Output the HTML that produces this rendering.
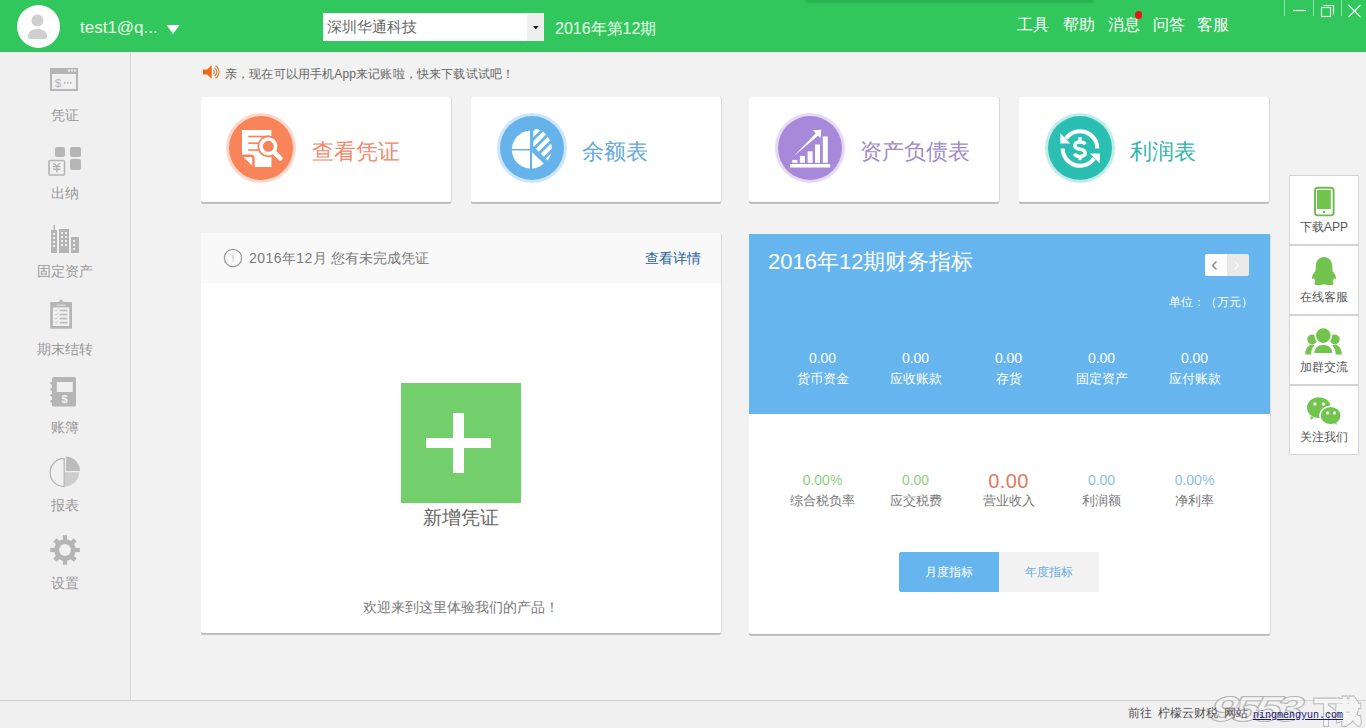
<!DOCTYPE html>
<html><head><meta charset="utf-8">
<style>
*{margin:0;padding:0;box-sizing:border-box}
html,body{width:1366px;height:728px;overflow:hidden;background:#f2f2f2;font-family:"Liberation Sans",sans-serif;position:relative}
.a{position:absolute}
.t{position:absolute;white-space:nowrap;line-height:1}
#hdr{left:0;top:0;width:1366px;height:52px;background:#32c75d}
#side{left:0;top:53px;width:130px;height:647px;background:#f0f0f0}
#sline{left:130px;top:53px;width:1px;height:647px;background:#d4d4d4;box-shadow:1px 0 0 #f7f7f7,2px 0 0 #f5f5f5}
#foot{left:0;top:700px;width:1366px;height:28px;background:#f0f0f0;border-top:1px solid #d0d0d0}
.nav{width:130px;left:0;text-align:center;font-size:14px;color:#999}
.card{position:absolute;background:#fff;border-radius:2px;box-shadow:1px 0 0 #d8d8d8,0 1px 0 #bcbcbc,0 2px 0.6px #c2c2c2}
.circ{position:absolute;width:70px;height:70px;border-radius:50%}
.ctext{font-size:22px}
.rb{position:absolute;left:1289px;width:70px;height:70px;background:#fff;border:1px solid #d4d4d4}
.rb .t{left:0;width:68px;top:45px;font-size:12px;color:#555;text-align:center}
.val{font-size:14px;text-align:center;width:93px}
.lab{font-size:13px;text-align:center;width:93px}
</style></head><body>
<!-- header -->
<div id="hdr" class="a"></div>
<div class="a" style="left:0;top:51px;width:1366px;height:1px;background:#37bb63"></div>
<div class="a" style="left:0;top:52px;width:1366px;height:1px;background:#e4f9e6"></div>
<div class="a" style="left:806px;top:0;width:288px;height:6px;background:linear-gradient(rgba(24,150,60,.85) 0,rgba(30,160,66,.55) 25%,rgba(40,180,80,.2) 60%,rgba(51,198,92,0) 100%);filter:blur(0.8px)"></div>
<div class="a" style="left:17px;top:5px;width:43px;height:43px;border-radius:50%;background:#fff"></div>
<svg class="a" style="left:17px;top:5px" width="43" height="43" viewBox="0 0 43 43">
<circle cx="20.5" cy="15.5" r="6" fill="#cfcfcf"/>
<path d="M11 32 Q11 24 20.5 24 Q30 24 30 32 Q30 34 28 34 L13 34 Q11 34 11 32Z" fill="#cfcfcf"/>
</svg>
<div class="t" style="left:80px;top:19px;font-size:17px;color:#e8ffe8">test1@q...</div>
<svg class="a" style="left:166px;top:25px" width="14" height="10"><path d="M0.5 0 L13.5 0 L7 9Z" fill="#fff"/></svg>
<div class="a" style="left:323px;top:13px;width:221px;height:28px;background:#fff"></div>
<div class="a" style="left:527px;top:13px;width:17px;height:28px;background:#efefef"></div>
<svg class="a" style="left:532.5px;top:25.8px" width="6" height="4"><path d="M0 0 L5.6 0 L2.8 3.2Z" fill="#111"/></svg>
<div class="t" style="left:327px;top:19px;font-size:15px;color:#666">深圳华通科技</div>
<div class="t" style="left:555px;top:20.5px;font-size:16px;color:#eaffea">2016年第12期</div>
<div class="t" style="left:1017px;top:17px;font-size:16px;color:#fff">工具</div>
<div class="t" style="left:1063px;top:17px;font-size:16px;color:#fff">帮助</div>
<div class="t" style="left:1108px;top:17px;font-size:16px;color:#fff">消息</div>
<div class="t" style="left:1153px;top:17px;font-size:16px;color:#fff">问答</div>
<div class="t" style="left:1197px;top:17px;font-size:16px;color:#fff">客服</div>
<div class="a" style="left:1134.5px;top:11px;width:7.5px;height:7.5px;border-radius:50%;background:#e8161a"></div>
<div class="a" style="left:1284px;top:0;width:1px;height:16px;background:rgba(255,255,255,.45)"></div>
<div class="a" style="left:1313px;top:0;width:1px;height:16px;background:rgba(255,255,255,.45)"></div>
<div class="a" style="left:1341px;top:0;width:1px;height:16px;background:rgba(255,255,255,.45)"></div>
<svg class="a" style="left:1285px;top:0" width="81" height="20">
<path d="M8 10.5 H21" stroke="#e6ffe6" stroke-width="1.2"/>
<rect x="36.5" y="7.5" width="9" height="9" fill="none" stroke="#e6ffe6" stroke-width="1.2"/>
<path d="M38.5 5.5 H48.5 V14.5" fill="none" stroke="#e6ffe6" stroke-width="1.2"/>
<path d="M63.5 5 L75.5 17 M75.5 5 L63.5 17" stroke="#e6ffe6" stroke-width="1.3"/>
</svg>
<!-- sidebar -->
<div id="side" class="a"></div>
<div id="sline" class="a"></div>
<svg class="a" style="left:0;top:52px" width="130" height="560" viewBox="0 52 130 560">
<g fill="#b5b5b5">
<!-- voucher window -->
<rect x="50" y="68" width="28" height="23" fill="#b5b5b5"/>
<rect x="52" y="74" width="24" height="15" fill="#f0f0f0"/>
<rect x="68" y="69.5" width="2" height="2" fill="#f0f0f0"/><rect x="71" y="69.5" width="2" height="2" fill="#f0f0f0"/><rect x="74" y="69.5" width="2" height="2" fill="#f0f0f0"/>
<text x="55" y="87" font-size="11" font-family="Liberation Sans" fill="#b5b5b5">$</text>
<rect x="64" y="82" width="1.6" height="1.6"/><rect x="67" y="82" width="1.6" height="1.6"/><rect x="70" y="82" width="1.6" height="1.6"/>
<!-- cashier -->
<rect x="55" y="147" width="10" height="10" rx="2"/>
<rect x="70" y="147" width="11" height="10" rx="2"/>
<rect x="70" y="159" width="11" height="11" rx="2"/>
<rect x="49" y="160.5" width="15.5" height="14.5" rx="1" fill="none" stroke="#b5b5b5" stroke-width="1.6"/>
<path d="M53.5 163.2 L56.8 166.2 M60 163.2 L56.8 166.2 M53 166.6 H60.5 M53 169.3 H60.5 M56.8 166.2 V172.5" stroke="#b5b5b5" stroke-width="1.4" fill="none"/>
<!-- fixed assets -->
<rect x="53.5" y="225" width="1.5" height="6"/>
<rect x="51" y="230" width="6" height="23"/>
<rect x="59" y="229" width="10" height="24"/>
<rect x="71" y="237" width="8" height="16"/>
<g fill="#f0f0f0">
<rect x="53" y="233" width="2" height="2"/><rect x="53" y="237" width="2" height="2"/><rect x="53" y="241" width="2" height="2"/><rect x="53" y="245" width="2" height="2"/>
<rect x="61" y="232" width="2" height="2"/><rect x="65" y="232" width="2" height="2"/><rect x="61" y="236" width="2" height="2"/><rect x="65" y="236" width="2" height="2"/><rect x="61" y="240" width="2" height="2"/><rect x="65" y="240" width="2" height="2"/><rect x="61" y="244" width="2" height="2"/><rect x="65" y="244" width="2" height="2"/>
<rect x="73" y="240" width="2" height="2"/><rect x="73" y="244" width="2" height="2"/><rect x="73" y="248" width="2" height="2"/>
</g>
<!-- clipboard -->
<rect x="50.2" y="302" width="21.8" height="26.7" rx="0.8"/>
<rect x="52.9" y="307.4" width="16.4" height="18.6" fill="#f0f0f0"/>
<path d="M56.8 304.6 L59 301.5 L61 299 L63 301.5 L65.2 304.6Z"/>
<path d="M56.5 305.2 H65.5" stroke="#e4e4e4" stroke-width="1"/>
<g fill="#bdbdbd"><rect x="59.7" y="309.6" width="7.6" height="1.7"/><rect x="59.7" y="313.7" width="7.6" height="1.7"/><rect x="59.7" y="317.7" width="7.6" height="1.7"/><rect x="59.7" y="321.8" width="7.6" height="1.7"/></g>
<g fill="none" stroke="#c8c8c8" stroke-width="0.9"><path d="M55 310 L56 311.2 L58 308.8"/><path d="M55 314 L56 315.2 L58 312.8"/><path d="M55 318 L56 319.2 L58 316.8"/><path d="M55 322 L56 323.2 L58 320.8"/></g>
<!-- book -->
<rect x="52" y="377" width="24" height="29.6" rx="1.5"/>
<rect x="56.8" y="382" width="15.9" height="10" fill="#f0f0f0"/>
<circle cx="51.6" cy="383.3" r="1.4"/><circle cx="51.6" cy="389.3" r="1.4"/><circle cx="51.6" cy="395.3" r="1.4"/><circle cx="51.6" cy="401.3" r="1.4"/>
<text x="61.6" y="403.3" font-size="11" font-weight="bold" font-family="Liberation Sans" fill="#f0f0f0">$</text>
<!-- pie -->
<path d="M64.2 458.3 A14.1 14.1 0 0 0 64.2 486.5 Z" fill="none" stroke="#b5b5b5" stroke-width="1.3"/>
<path d="M66 456.5 A14.5 14.5 0 0 1 80 471 H66Z" fill="#bcbcbc"/>
<path d="M65 472.3 H79.2 A14.2 14.2 0 0 1 65 486.5Z" fill="#cdcdcd"/>
<!-- gear -->
<g transform="translate(65 550)">
<circle r="10.8"/>
<rect x="-2.1" y="-14.8" width="4.2" height="29.6"/><rect x="-14.8" y="-2.1" width="29.6" height="4.2"/>
<rect x="-2.3" y="-14.3" width="4.6" height="28.6" transform="rotate(45)"/><rect x="-14.3" y="-2.3" width="28.6" height="4.6" transform="rotate(45)"/>
<circle r="5.9" fill="#f0f0f0"/>
</g>
</g>
</svg>
<div class="t nav" style="top:108px">凭证</div>
<div class="t nav" style="top:186px">出纳</div>
<div class="t nav" style="top:264px">固定资产</div>
<div class="t nav" style="top:342px">期末结转</div>
<div class="t nav" style="top:420px">账簿</div>
<div class="t nav" style="top:498px">报表</div>
<div class="t nav" style="top:576px">设置</div>
<!-- notice -->
<svg class="a" style="left:202px;top:65px" width="18" height="14" viewBox="0 0 18 14">
<path d="M1 4.4 H5 L9.7 0.3 V13.6 L5 9.5 H1Z" fill="#f06a10"/>
<g fill="none" stroke="#d9772f" stroke-width="1.05">
<path d="M11.34 4.93 A2.7 2.7 0 0 1 11.34 9.07"/><path d="M12.47 2.90 A5.0 5.0 0 0 1 12.47 11.10"/><path d="M13.52 0.72 A7.4 7.4 0 0 1 13.52 13.28"/>
</g>
</svg>
<div class="t" style="left:225px;top:67.5px;font-size:12px;color:#666;letter-spacing:0.15px">亲，现在可以用手机App来记账啦，快来下载试试吧！</div>
<!-- cards -->
<div class="card" style="left:201px;top:97px;width:250px;height:105px"></div>
<div class="card" style="left:471px;top:97px;width:250px;height:105px"></div>
<div class="card" style="left:749px;top:97px;width:250px;height:105px"></div>
<div class="card" style="left:1019px;top:97px;width:250px;height:105px"></div>
<div class="circ" style="left:226px;top:113px;background:#fcd9cb"></div>
<div class="circ" style="left:229px;top:116px;width:64px;height:64px;background:#f9845a"></div>
<div class="circ" style="left:497px;top:113px;background:#cbe6fa"></div>
<div class="circ" style="left:500px;top:116px;width:64px;height:64px;background:#66b3ec"></div>
<div class="circ" style="left:775px;top:113px;background:#e4daf6"></div>
<div class="circ" style="left:778px;top:116px;width:64px;height:64px;background:#a68ad9"></div>
<div class="circ" style="left:1045px;top:113px;background:#c2ece8"></div>
<div class="circ" style="left:1048px;top:116px;width:64px;height:64px;background:#2bbfb3"></div>
<!-- icon: voucher search -->
<svg class="a" style="left:226px;top:113px" width="70" height="70" viewBox="0 0 70 70">
<path d="M16 17 H45.4 V54 H28.7 V45 Q28.7 41.5 25 41.5 H16Z" fill="#fff"/>
<path d="M17.5 44 H24.5 Q26.2 44 26.2 45.7 V52.8Z" fill="#fff"/>
<g fill="#f9845a"><rect x="22.2" y="22.7" width="22" height="1.6"/><rect x="22.2" y="29.4" width="11.5" height="1.6"/><rect x="22.2" y="36.2" width="11.5" height="1.6"/></g>
<circle cx="42.3" cy="33.3" r="10.8" fill="#f9845a"/>
<path d="M48.5 39.5 L54.6 45.6" stroke="#f9845a" stroke-width="8" stroke-linecap="round"/>
<circle cx="42.3" cy="33.3" r="7.3" fill="none" stroke="#fff" stroke-width="3.6"/>
<path d="M48 39 L54.3 45.3" stroke="#fff" stroke-width="4.6" stroke-linecap="round"/>
</svg>
<!-- icon: pie -->
<svg class="a" style="left:497px;top:113px" width="70" height="70" viewBox="0 0 70 70">
<g fill="#fff">
<path d="M33 35.9 V17.7 A18.9 18.9 0 0 0 14.9 35.9 Z"/>
<path d="M33 37.4 H14.9 A18.9 18.9 0 0 0 33 55.5 Z"/>
<path d="M35 39.2 V55.5 A18.9 18.9 0 0 0 46.8 50.4 Z"/>
</g>
<defs><clipPath id="pc"><path d="M36.3 33.2 V15.6 A20 20 0 0 1 50.6 47.6 Z"/></clipPath></defs>
<g clip-path="url(#pc)" stroke="#fff" stroke-width="4.4">
<path d="M0 57.5 L57.5 0 M0 67.5 L67.5 0 M0 77.5 L77.5 0 M0 87.5 L87.5 0 M0 97.5 L97.5 0"/>
</g>
</svg>
<!-- icon: chart -->
<svg class="a" style="left:775px;top:113px" width="70" height="70" viewBox="0 0 70 70">
<g fill="#fff">
<rect x="15" y="51" width="40.2" height="3.5"/>
<rect x="17.2" y="46.9" width="5.2" height="2.9"/><rect x="24.9" y="42.9" width="5" height="6.9"/><rect x="32.6" y="38.3" width="5" height="11.5"/><rect x="40" y="31.5" width="5" height="18.3"/><rect x="47.8" y="23.4" width="5" height="26.4"/>
<path d="M18.6 43.2 L41 20 L43.2 22.4 Z"/>
<path d="M37.9 17.2 L46.3 16.8 L45.5 25.2 Z"/>
</g>
</svg>
<!-- icon: profit -->
<svg class="a" style="left:1045px;top:113px" width="70" height="70" viewBox="0 0 70 70">
<g fill="none" stroke="#fff" stroke-width="4">
<path d="M52.30 35.50 A17.3 17.3 0 0 0 20.83 25.58"/>
<path d="M17.70 35.50 A17.3 17.3 0 0 0 49.17 45.42"/>
</g>
<g fill="#fff">
<path d="M15.3 20.3 L15.3 30.6 L25.3 30.4 Z"/>
<path d="M45 40.6 L54.8 40.6 L54.8 50.4 Z"/>
</g>
<path d="M40.3 31.2 C39.4 29.5 37.6 28.9 35 28.9 C31.6 28.9 29.8 30.4 29.8 32.7 C29.8 35 32 35.7 35 36.2 C38.1 36.7 40.3 37.6 40.3 40.1 C40.3 42.4 38.2 43.4 35 43.4 C32 43.4 30.1 42.5 29.4 40.6" fill="none" stroke="#fff" stroke-width="3.5"/>
<rect x="33.4" y="24" width="3.2" height="4.5" fill="#fff"/><rect x="33.4" y="43" width="3.2" height="4.2" fill="#fff"/>
</svg>
<div class="t ctext" style="left:312px;top:141px;color:#f08a6c">查看凭证</div>
<div class="t ctext" style="left:582px;top:141px;color:#64a9dc">余额表</div>
<div class="t ctext" style="left:859.5px;top:141px;color:#a08bc8">资产负债表</div>
<div class="t ctext" style="left:1130px;top:141px;color:#33b5a8">利润表</div>
<!-- left panel -->
<div class="card" style="left:201px;top:233px;width:520px;height:400px"></div>
<div class="a" style="left:201px;top:233px;width:520px;height:50px;background:#f9f9f9;border-radius:2px 2px 0 0"></div>
<svg class="a" style="left:223px;top:248px" width="20" height="20" viewBox="0 0 20 20">
<circle cx="10" cy="10" r="8.6" fill="none" stroke="#9a9a9a" stroke-width="1.2"/>
<rect x="9.5" y="6.5" width="1" height="5" fill="#bbb"/><rect x="9.5" y="12.5" width="1" height="1.2" fill="#bbb"/>
</svg>
<div class="t" style="left:249px;top:251px;font-size:14px;color:#7a7a7a"><span style="letter-spacing:0.5px">2016</span>年<span style="letter-spacing:0.5px">12</span>月 您有未完成凭证</div>
<div class="t" style="left:645px;top:251px;font-size:14px;color:#245f9e;font-weight:500">查看详情</div>
<div class="a" style="left:401px;top:383px;width:120px;height:120px;background:#72cf6b"></div>
<div class="a" style="left:426px;top:438px;width:65px;height:10px;background:#fff"></div>
<div class="a" style="left:453px;top:413px;width:11px;height:60px;background:#fff"></div>
<div class="t" style="left:401px;top:508px;width:120px;text-align:center;font-size:19px;color:#666">新增凭证</div>
<div class="t" style="left:201px;top:600px;width:520px;text-align:center;font-size:14px;color:#777">欢迎来到这里体验我们的产品！</div>
<!-- right panel -->
<div class="card" style="left:749px;top:234px;width:521px;height:400px"></div>
<div class="a" style="left:749px;top:234px;width:521px;height:180px;background:#66b5ee"></div>
<div class="t" style="left:768px;top:250.5px;font-size:22px;color:#fff">2016年12期财务指标</div>
<div class="a" style="left:1205px;top:254px;width:22px;height:22px;background:#fff;border-radius:2px 0 0 2px"></div>
<div class="a" style="left:1227px;top:254px;width:22px;height:22px;background:#e9e9e9;border-radius:0 2px 2px 0"></div>
<svg class="a" style="left:1205px;top:254px" width="44" height="22">
<path d="M11.5 7.5 L7.5 11.5 L11.5 15.5" fill="none" stroke="#808080" stroke-width="1.3"/>
<path d="M29.5 7.5 L33.5 11.5 L29.5 15.5" fill="none" stroke="#fafafa" stroke-width="1.3"/>
</svg>
<div class="t" style="left:1169px;top:296px;font-size:12px;color:#fff;font-weight:500">单位：（万元）</div>
<div class="t val" style="left:776px;top:351px;color:#fff">0.00</div>
<div class="t val" style="left:869px;top:351px;color:#fff">0.00</div>
<div class="t val" style="left:962px;top:351px;color:#fff">0.00</div>
<div class="t val" style="left:1055px;top:351px;color:#fff">0.00</div>
<div class="t val" style="left:1148px;top:351px;color:#fff">0.00</div>
<div class="t lab" style="left:776px;top:372px;color:#fff">货币资金</div>
<div class="t lab" style="left:869px;top:372px;color:#fff">应收账款</div>
<div class="t lab" style="left:962px;top:372px;color:#fff">存货</div>
<div class="t lab" style="left:1055px;top:372px;color:#fff">固定资产</div>
<div class="t lab" style="left:1148px;top:372px;color:#fff">应付账款</div>
<div class="t val" style="left:776px;top:473px;color:#8fd07f">0.00%</div>
<div class="t val" style="left:869px;top:473px;color:#8fd07f">0.00</div>
<div class="t val" style="left:962px;top:471px;color:#e3785f;font-size:20px;letter-spacing:0.4px">0.00</div>
<div class="t val" style="left:1055px;top:473px;color:#8cbfe2">0.00</div>
<div class="t val" style="left:1148px;top:473px;color:#8cbfe2">0.00%</div>
<div class="t lab" style="left:776px;top:494px;color:#777">综合税负率</div>
<div class="t lab" style="left:869px;top:494px;color:#777">应交税费</div>
<div class="t lab" style="left:962px;top:494px;color:#777">营业收入</div>
<div class="t lab" style="left:1055px;top:494px;color:#777">利润额</div>
<div class="t lab" style="left:1148px;top:494px;color:#777">净利率</div>
<div class="a" style="left:899px;top:552px;width:100px;height:40px;background:#66b5ee;border-radius:2px 0 0 2px"></div>
<div class="a" style="left:999px;top:552px;width:100px;height:40px;background:#f2f2f2;border-radius:0 2px 2px 0"></div>
<div class="t" style="left:899px;top:566px;width:100px;text-align:center;font-size:12px;color:#fff">月度指标</div>
<div class="t" style="left:999px;top:566px;width:100px;text-align:center;font-size:12px;color:#6aaee0">年度指标</div>
<!-- right float -->
<div class="rb" style="top:175px"><div class="t">下载APP</div></div>
<div class="rb" style="top:245px"><div class="t">在线客服</div></div>
<div class="rb" style="top:315px"><div class="t">加群交流</div></div>
<div class="rb" style="top:385px"><div class="t">关注我们</div></div>
<svg class="a" style="left:1289px;top:175px" width="70" height="280" viewBox="0 0 70 280">
<g fill="#73c44e">
<rect x="26" y="12.8" width="18.6" height="27.6" rx="2.8" fill="none" stroke="#6fb94e" stroke-width="1.9"/>
<rect x="28" y="15" width="13.8" height="19"/>
<circle cx="35" cy="37" r="1.1" fill="#5f8f4a"/>
<!-- penguin -->
<path d="M35 82 C30 82 27 85.5 26.8 91 C26.6 93 26.6 95 26.3 96.5 C24.5 98 23 100.5 23 103 C23 104.3 24 104.3 25 103 C25.5 104.5 26 105.5 26.5 106.5 C25.3 107.3 25 108.5 25.8 109.5 C27 110.5 30.5 110.5 32.5 109.8 C33.5 109.5 34.3 109.2 35 109.2 C35.7 109.2 36.5 109.5 37.5 109.8 C39.5 110.5 43 110.5 44.2 109.5 C45 108.5 44.7 107.3 43.5 106.5 C44 105.5 44.5 104.5 45 103 C46 104.3 47 104.3 47 103 C47 100.5 45.5 98 43.7 96.5 C43.4 95 43.4 93 43.2 91 C43 85.5 40 82 35 82 Z"/>
<!-- group -->
<circle cx="23.2" cy="164.5" r="4.9"/>
<circle cx="45.8" cy="164.5" r="4.9"/>
<path d="M16.2 179.6 C16.2 173.5 19 170 23 169.7 C27 170 29.5 172 30.5 175 V179.6 Z"/>
<path d="M52.8 179.6 C52.8 173.5 50 170 46 169.7 C42 170 39.5 172 38.5 175 V179.6 Z"/>
<circle cx="34.3" cy="160.6" r="8.9" fill="#fff"/>
<path d="M23.5 179.6 C23.5 172 28 168.6 34.3 168.6 C40.6 168.6 45.1 172 45.1 179.6 Z" stroke="#fff" stroke-width="3"/>
<circle cx="34.3" cy="160.6" r="7.3"/>
<!-- wechat -->
<ellipse cx="29.9" cy="232.7" rx="11.9" ry="10.4"/>
<path d="M21.5 241 L21.8 245 L25 242.5Z"/>
<ellipse cx="41.6" cy="240.5" rx="10.6" ry="9.2" stroke="#fff" stroke-width="1.4"/>
<path d="M45.5 248 L47.8 250 L47.5 247Z"/>
</g>
<g fill="#e9f7e2">
<circle cx="25.8" cy="229" r="1.8"/><circle cx="34.4" cy="229" r="1.8"/>
<circle cx="38.6" cy="237.9" r="1.6"/><circle cx="45.4" cy="237.9" r="1.6"/>
</g>
</svg>
<!-- footer -->
<div id="foot" class="a"></div>
<svg class="a" style="left:1200px;top:688px" width="166" height="40" viewBox="0 0 166 40">
<g font-family="Liberation Sans" font-weight="bold" fill="rgba(252,252,252,0.35)" stroke="#a8a8a8" stroke-width="1.1" paint-order="stroke">
<text x="0" y="0" font-size="37" font-style="italic" letter-spacing="-5" transform="translate(9 32.5) scale(1.38 0.95) skewX(-6)">9553</text>
</g>
<g font-family="Liberation Sans" font-weight="bold" transform="translate(115 32.5) scale(0.95 1.12)" opacity="0.8">
<text x="0" y="0" font-size="25" letter-spacing="-2" fill="#aaa" stroke="#aaa" stroke-width="3.4">下载</text>
<text x="0" y="0" font-size="25" letter-spacing="-2" fill="#f7f7f7" stroke="#f7f7f7" stroke-width="1.5">下载</text>
</g>
</svg>
<div class="t" style="left:1128px;top:707px;font-size:12px;color:#555">前往</div>
<div class="t" style="left:1157.5px;top:707px;font-size:12px;color:#555">柠檬云财税</div>
<div class="t" style="left:1224px;top:707px;font-size:12px;color:#555">网站</div>
<div class="t" style="left:1253px;top:711px;font-size:10px;color:#15157a;font-family:'Liberation Mono',monospace;text-decoration:underline">ningmengyun.com</div>

</body></html>
